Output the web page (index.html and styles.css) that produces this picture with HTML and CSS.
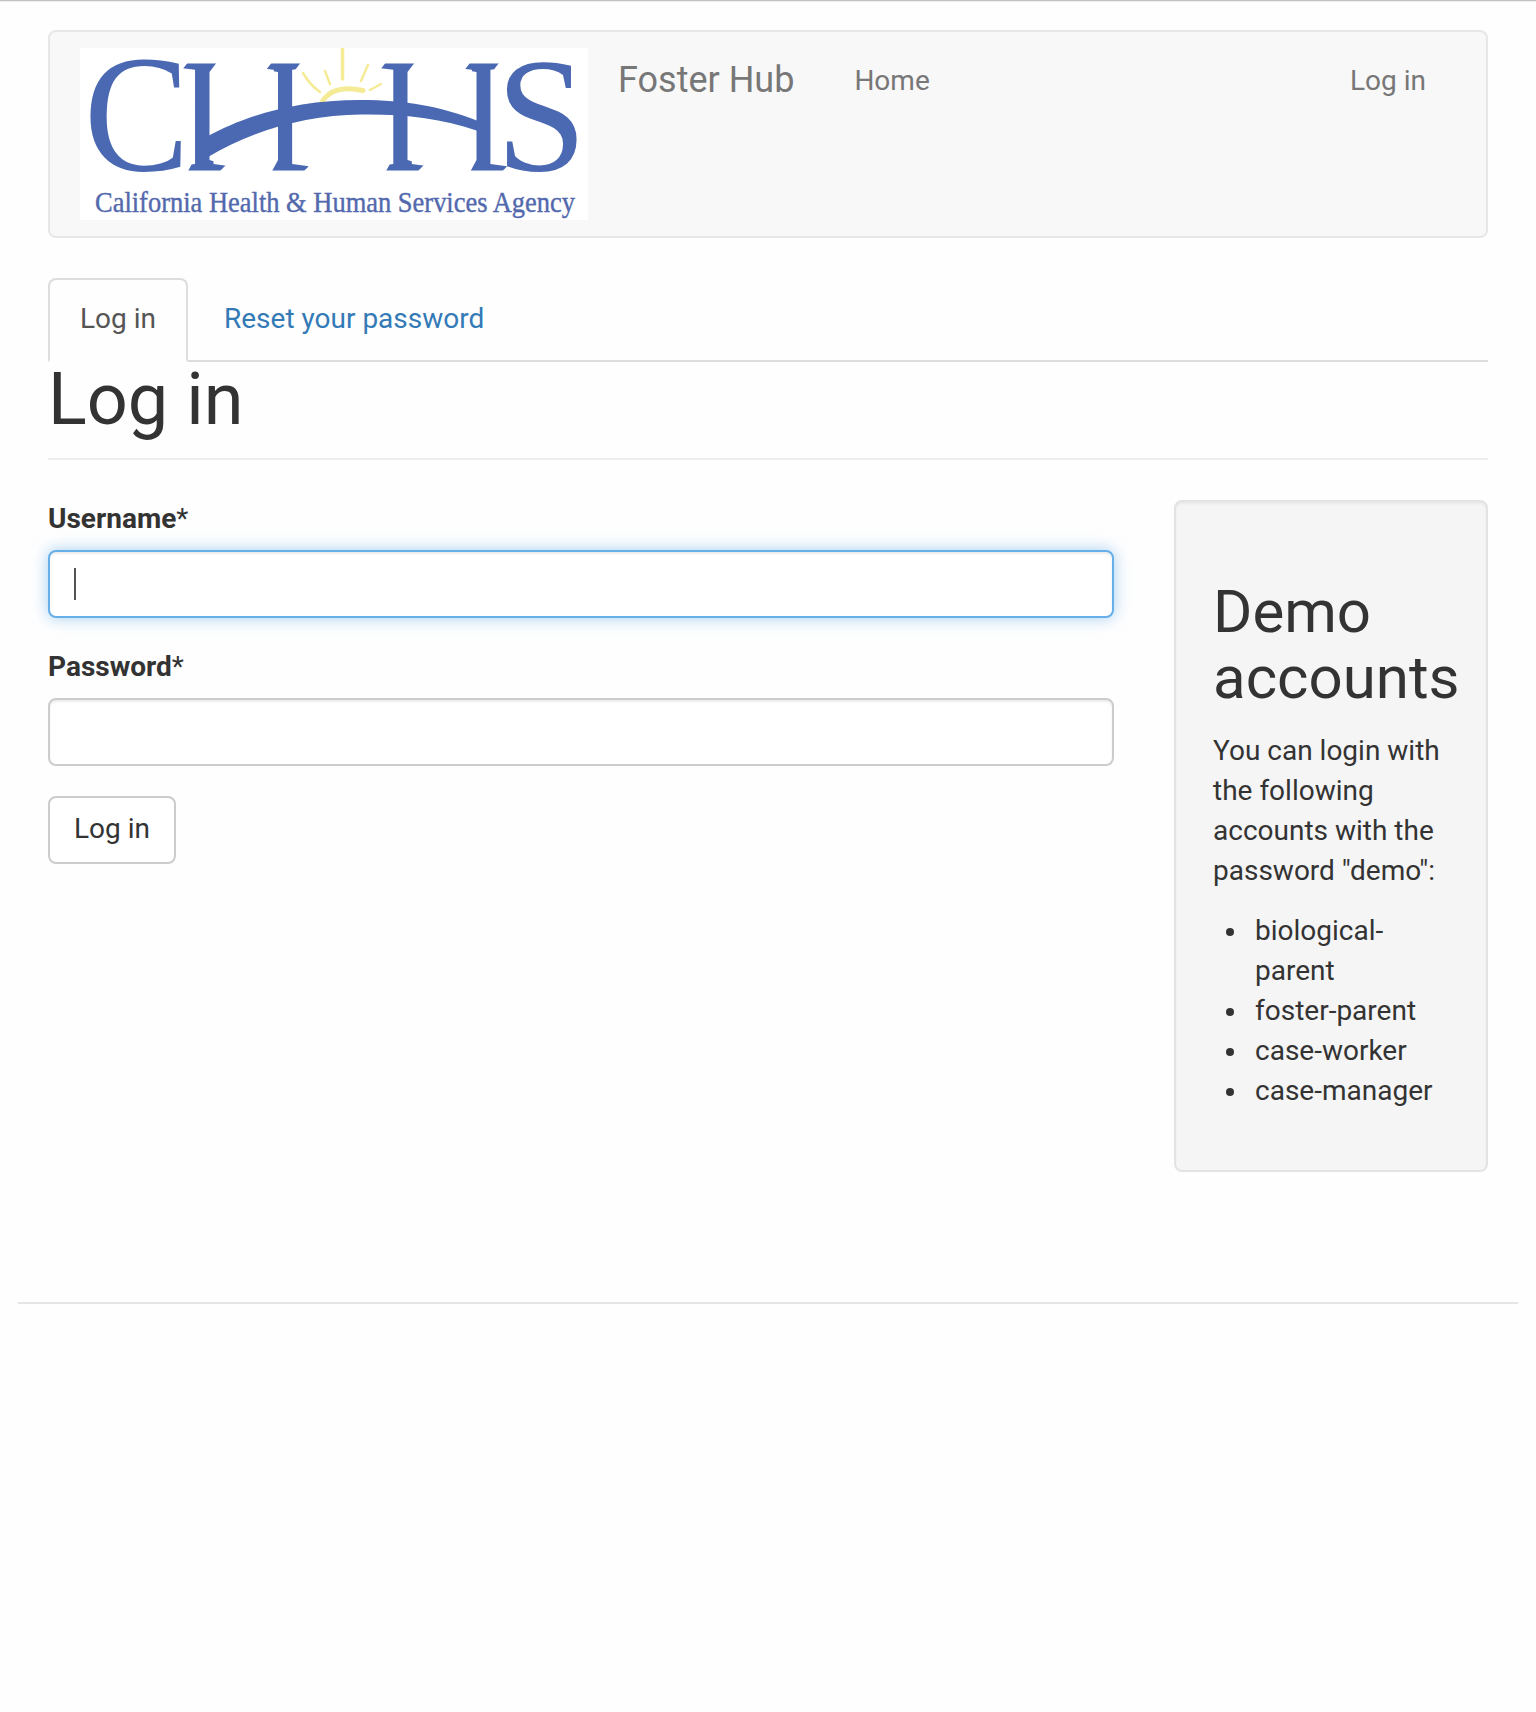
FILE: index.html
```html
<!DOCTYPE html>
<html lang="en">
<head>
<meta charset="utf-8">
<title>Log in | Foster Hub</title>
<link rel="stylesheet" href="styles.css">
</head>
<body>
<header class="navbar">
  <a class="logo">
    <svg width="508" height="172" viewBox="0 0 508 172" role="img" aria-label="California Health &amp; Human Services Agency">
      <defs>
        <!-- Keeps the towers of the H's and leaves room for the arch in place of the crossbars -->
        <clipPath id="towers">
          <path id="tower" d="M102 22L109 13H138L129.500 24V112L146 117L138 125H107L114 112V24Z"/>
          <use href="#tower" x="84"/>
          <use href="#tower" x="198"/>
          <use href="#tower" x="282.500"/>
        </clipPath>
      </defs>
      <rect width="508" height="172" fill="#fff"/>
      <g class="logo-sun">
        <path d="M223 25Q230 37 240 44M245 23L250 36M281 33L288 17M301 36L290 42" stroke-width="2.500"/>
        <path d="M262.500 1V31" stroke-width="3.500"/>
        <path d="M242 54Q253 36 283 42.500" stroke-width="5"/>
      </g>
      <g class="logo-letters">
        <text transform="translate(4 121.500) scale(.97 1.03)">C</text>
        <g clip-path="url(#towers)">
          <text transform="translate(93 122) scale(1.2 1)">H</text>
          <text transform="translate(291.300 122) scale(1.2 1)">H</text>
        </g>
        <text transform="translate(416 122)">S</text>
      </g>
      <path d="M128 88C164 69 212 52 281 52C325 52 360 58 398 73V83C360 70 325 66 281 66.500C225 67 172 83 128 109Z" fill="#4a69b2"/>
      <text class="logo-caption" x="15" y="163.500" textLength="480" lengthAdjust="spacingAndGlyphs">California Health &amp; Human Services Agency</text>
    </svg>
  </a>
  <a class="brand">Foster Hub</a>
  <nav class="menu">
    <a>Home</a>
    <a>Log in</a>
  </nav>
</header>
<div class="container">
  <nav class="tabs">
    <a class="tab active">Log in</a>
    <a class="tab">Reset your password</a>
  </nav>
  <h1>Log in</h1>
  <div class="row">
    <form class="login">
      <label>Username<span>*</span></label>
      <div class="control focused"><i class="caret"></i></div>
      <label>Password<span>*</span></label>
      <div class="control"></div>
      <button type="button">Log in</button>
    </form>
    <aside class="well">
      <h2>Demo accounts</h2>
      <p>You can login with the following accounts with the password "demo":</p>
      <ul>
        <li>biological-parent</li>
        <li>foster-parent</li>
        <li>case-worker</li>
        <li>case-manager</li>
      </ul>
    </aside>
  </div>
</div>
<footer></footer>
</body>
</html>
```
FILE: styles.css
```css
* { box-sizing: border-box; }
body {
  margin: 0;
  min-height: 1712px;
  border-top: 1px solid #c2c2c2;
  box-shadow: inset 0 1px 0 #eee;
  background: #fefefe;
  color: #333;
  font: 28px/40px Roboto, sans-serif;
  display: flow-root;
}
.navbar {
  display: flex;
  align-items: flex-start;
  height: 208px;
  margin: 29px 48px 0;
  padding: 16px 60px 0 30px;
  border: 2px solid #e7e7e7;
  border-radius: 8px;
  background: #f8f8f8;
  color: #777;
}
.logo svg { display: block; }
.logo-sun { fill: none; stroke: #f5eb96; stroke-linecap: round; }
.logo-letters { font: 163px "Liberation Serif", serif; fill: #4a69b2; }
.logo-caption { font: 29px "Liberation Serif", serif; fill: #5369ad; stroke: #5369ad; stroke-width: .4; }
.brand { margin: 12px 0 0 30px; font-size: 36px; }
.menu { flex: 1; display: flex; justify-content: space-between; margin: 13px 0 0 60px; }
.container { margin: 40px 48px 0; }
.tabs { display: flex; gap: 4px; height: 84px; border-bottom: 2px solid #ddd; }
.tab {
  height: 84px;
  padding: 19px 30px 0;
  border: 2px solid transparent;
  border-radius: 8px 8px 0 0;
  color: #337ab7;
}
.tab.active { border-color: #ddd; border-bottom-color: #fefefe; background: #fefefe; color: #555; }
h1, h2 { margin: 0; font-weight: 400; }
h1 { height: 98px; border-bottom: 2px solid #eee; font-size: 72px; line-height: 76px; }
.row { display: flex; gap: 60px; align-items: flex-start; margin-top: 40px; }
.login { width: 1066px; }
label { display: block; margin-bottom: 12px; font-weight: 700; line-height: 38px; }
label span { font-weight: 400; }
.control {
  height: 68px;
  margin-bottom: 30px;
  padding: 16px 24px;
  border: 2px solid #ccc;
  border-radius: 8px;
  background: #fff;
  box-shadow: inset 0 2px 2px rgba(0,0,0,.075);
}
.focused { border-color: #66afe9; box-shadow: inset 0 2px 2px rgba(0,0,0,.075), 0 0 16px rgba(102,175,233,.6); }
.caret { display: block; width: 2px; height: 32px; background: #555; }
button {
  display: block;
  width: 128px;
  height: 68px;
  padding: 0 0 2px;
  border: 2px solid #ccc;
  border-radius: 8px;
  background: #fff;
  color: #333;
  font: inherit;
}
.well {
  width: 314px;
  height: 672px;
  padding: 77px 30px 0 37px;
  border: 2px solid #e3e3e3;
  border-radius: 8px;
  background: #f5f5f5;
  box-shadow: inset 0 2px 2px rgba(0,0,0,.05);
}
h2 { font-size: 60px; line-height: 66px; }
p { margin: 20px -10px 20px 0; }
ul { margin: 0; padding-left: 13px; list-style: none; }
li { display: flex; gap: 21px; }
li::before { content: ""; flex: none; width: 8px; height: 8px; margin-top: 17px; border-radius: 50%; background: #333; }
footer { margin: 130px 18px 0; border-top: 2px solid #e5e5e5; }
```
